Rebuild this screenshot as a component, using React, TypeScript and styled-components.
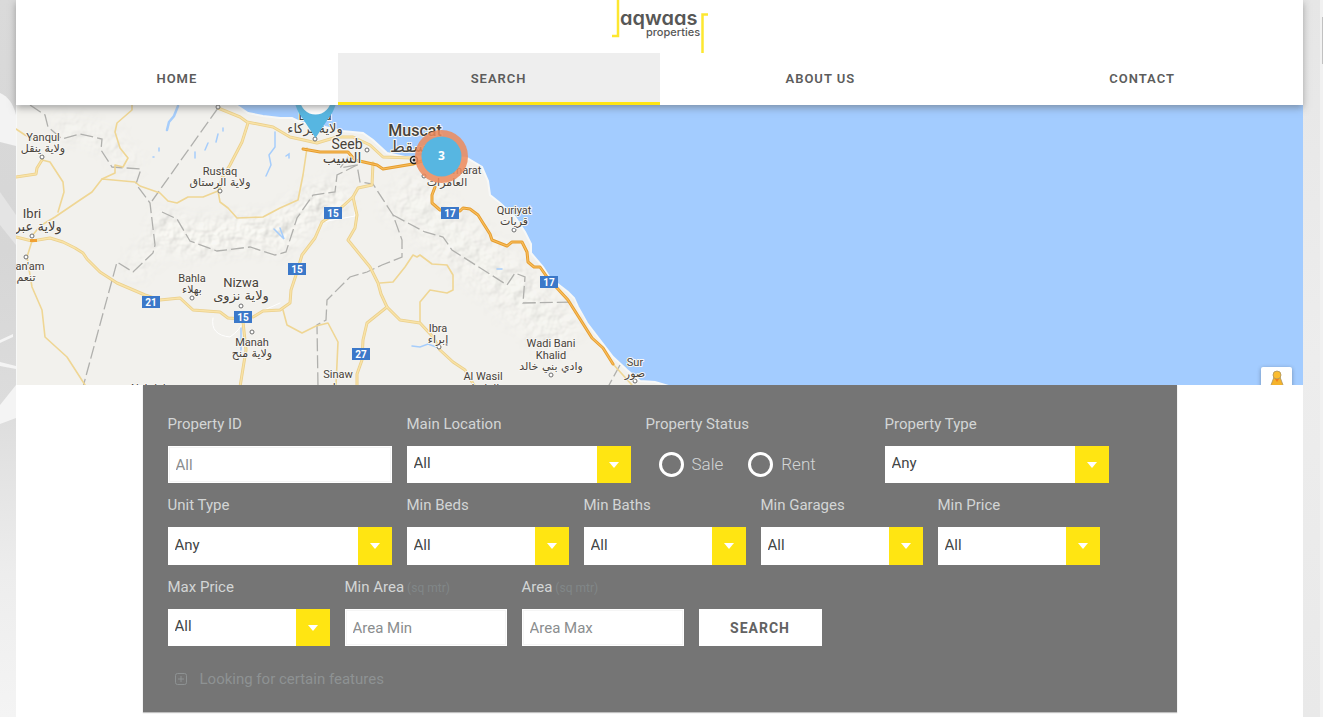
import React from "react";
import styled, { createGlobalStyle } from "styled-components";

const GlobalStyle = createGlobalStyle`
  *, *::before, *::after { box-sizing: border-box; }
  html { height: 100%; }
  body {
    margin: 0;
    min-height: 100%;
    overflow: hidden;
    background: #ededed;
    color: #5a5a5a;
    font-family: Roboto, "Liberation Sans", sans-serif;
  }
  input, select, button { font-family: inherit; border-radius: 0; }
`;

const Backdrop = styled.svg`
  position: fixed;
  inset: 0;
  width: 100%;
  height: 100%;
  z-index: -1;
`;

const Page = styled.div`
  min-height: 100vh;
  margin: 0 20px 0 16px;
  background: #fff;
`;

const Header = styled.header`
  position: relative;
  z-index: 2;
  background: #fff;
  box-shadow: 0 3px 7px rgba(90, 90, 90, 0.5);
`;

const LogoLink = styled.a`
  display: block;
  width: 100px;
  height: 53px;
  margin: 0 auto;
  svg { display: block; }
`;

const Nav = styled.nav`
  display: grid;
  grid-template-columns: repeat(4, 1fr);
`;

const NavLink = styled.a<{ $active?: boolean }>`
  height: 52px;
  border-bottom: 3px solid ${(p) => (p.$active ? "#ffe512" : "transparent")};
  background: ${(p) => (p.$active ? "#eeeeee" : "transparent")};
  color: #5c5c5c;
  font-size: 13px;
  font-weight: 600;
  line-height: 51px;
  letter-spacing: 1px;
  text-align: center;
  text-decoration: none;
`;

const MapArea = styled.section`
  position: relative;
  height: 280px;
  overflow: hidden;
  background: #a3ccff;
`;

const MapDrawing = styled.svg`
  display: block;
  width: 1287px;
  height: 280px;
`;

const Pegman = styled.button`
  position: absolute;
  right: 11px;
  bottom: -12px;
  width: 31px;
  height: 30px;
  padding: 0;
  border: 0;
  border-radius: 2px;
  background: #fff;
  box-shadow: 0 1px 4px rgba(0, 0, 0, 0.3);
  svg { display: block; margin: 2px auto; }
`;

const Panel = styled.form`
  max-width: 1034px;
  margin: 0 auto;
  padding: 17px 25px 18px;
  background: #757575;
  box-shadow: 0 1px 1px rgba(0, 0, 0, 0.25);
`;

const Row = styled.div`
  display: flex;
  flex-wrap: wrap;
  gap: 0 15px;
`;

const Field = styled.div<{ $wide?: boolean }>`
  width: ${(p) => (p.$wide ? 224 : 162)}px;
`;

const Label = styled.label`
  display: block;
  height: 44px;
  color: #d3d5d5;
  font-size: 15px;
  line-height: 44px;
  white-space: nowrap;
`;

const Unit = styled.small`
  color: #818788;
  font-size: 12px;
`;

const TextBox = styled.input`
  display: block;
  width: 100%;
  height: 37px;
  padding: 0 7px;
  border: 1px solid #fff;
  outline: 1px solid #f5f5f5;
  outline-offset: -2px;
  background: #fff;
  color: #444;
  font-size: 15px;
  &::placeholder { color: #8a8d8e; opacity: 1; }
`;

const SelectShell = styled.div<{ $tall?: boolean }>`
  display: grid;
  height: ${(p) => (p.$tall ? 38 : 37)}px;
`;

const Select = styled.select`
  grid-area: 1 / 1;
  width: 100%;
  padding: 0 40px 3px 7px;
  border: 0;
  appearance: none;
  background: #fff;
  color: #414546;
  font-size: 15px;
`;

const Arrow = styled.span`
  grid-area: 1 / 1;
  justify-self: end;
  display: grid;
  place-items: center;
  width: 34px;
  background: #ffe512;
  pointer-events: none;
  &::after {
    content: "";
    border: 5px solid transparent;
    border-top: 6px solid #fff;
    border-bottom: 0;
  }
`;

const RadioSet = styled.fieldset`
  width: 224px;
  min-width: 0;
  margin: 0;
  padding: 0;
  border: 0;
`;

const Legend = styled.legend`
  padding: 0;
  height: 44px;
  color: #d3d5d5;
  font-size: 15px;
  line-height: 44px;
`;

const RadioRow = styled.div`
  display: flex;
  gap: 25px;
  padding-left: 13px;
`;

const RadioLabel = styled.label`
  display: flex;
  align-items: center;
  gap: 8px;
  height: 36px;
  color: #d3d5d5;
  font-size: 17px;
  font-weight: 300;
`;

const Radio = styled.input`
  appearance: none;
  width: 25px;
  height: 25px;
  margin: 0;
  border: 3px solid #fff;
  border-radius: 50%;
  &:checked { background: radial-gradient(#fff 40%, transparent 45%); }
`;

const SearchButton = styled.button`
  align-self: end;
  width: 123px;
  height: 37px;
  border: 0;
  background: #fff;
  color: #626262;
  font-size: 14px;
  font-weight: 700;
  letter-spacing: 1px;
`;

const FeaturesLink = styled.a`
  display: inline-flex;
  align-items: center;
  gap: 13px;
  height: 20px;
  margin: 23px 0 5px 7px;
  color: #8e9293;
  font-size: 15px;
  text-decoration: none;
`;

function Logo() {
  return (
    <svg width="100" height="53" viewBox="610 0 100 53" role="img" aria-label="aqwaas properties">
      <path d="M618 0V36H612M702.500 53V14.500H708" fill="none" stroke="#fde730" strokeWidth="2.500" />
      <g fill="#575756" fontFamily="Inter, sans-serif" style={{ fontFeatureSettings: '"cv11" 1' }}>
        <text x="620" y="25" fontSize="20" fontWeight="600">aqwaas</text>
        <text x="646" y="36" fontSize="11" fontWeight="500">properties</text>
      </g>
    </svg>
  );
}

const localRoads = [
  "132,105 132,110 117,123 115,132 120,148 128,158 123,167 115,165 115,173 102,179",
  "16,129 25,135 37,141",
  "42,160 50,162 63,182 64,192 58,212",
  "32,236 40,226 55,217 80,200 92,192 102,179 135,182 140,186 160,193 168,201 177,203 188,197 203,197 218,191 220,202 228,208 237,218 263,217 280,208 298,200 303,175 307,148",
  "380,283 393,282 405,267 413,255 417,257 420,255 432,264 447,265 453,275 453,290 447,293 430,290 420,302 420,322",
  "283,310 287,325 302,333 316,326 328,323 338,342 336,385",
  "32,241 27,257 32,287 42,310 45,337 67,357 85,385",
  "613,364 632,385",
];

const mainRoads = [
  "16,177 36,174 37,168 42,160",
  "218,108 240,117 247,122 273,127 290,137 317,143 337,137 353,137 370,145 383,157 413,158",
  "248,123 242,142 230,165 222,178 219,190",
  "373,163 372,185 358,188 353,197 333,215 322,222 315,238 302,255 296,275 291,290 290,303 280,310 263,311 253,317",
  "353,197 357,215 355,228 348,240 370,267 378,283 381,294 387,307 400,320 420,323 433,337 440,350 453,362 465,370 475,387",
  "387,307 367,323 363,340 362,360 357,374 357,387",
  "16,237 32,241 50,238 63,242 75,248 83,253 87,259 100,272 117,283 145,295 160,300 180,298 193,310 220,312 228,318 243,319",
  "243,322 246,350 240,387",
];

const highways = [
  "303,149 320,152 348,152 355,160 377,165 383,169 413,164 425,160",
  "435,187 432,195 432,203 440,210 460,211 463,208 470,209 478,215 483,223 490,234 492,240 507,246 512,242 522,242 527,252 528,262 534,267 540,267 547,277 557,288 568,300 580,319 592,338 603,348 613,364",
];

const borders = [
  "30,105 45,115 48,127 62,139 80,134 102,139 101,150 112,167 141,169 136,184 150,203 155,245 153,253 133,272 117,262 83,387",
  "218,108 152,201",
  "162,212 177,219 190,241 217,251 250,247 275,255 286,252 297,218 313,195 335,192 337,175 357,165 360,182 373,184 393,215 402,240 402,257 382,265 367,272 350,277 327,300 326,320 317,325 318,387",
  "393,215 425,232 443,237 452,250 507,285 515,273 525,277 523,303 573,302",
  "348,157 340,168 357,165",
  "620,365 608,387",
];

type Place = { x: number; y: number; name: string; arabic?: string; ay?: number; size?: number; ax?: number; weight?: number };

const places: Place[] = [
  { x: 43, y: 141, name: "Yanqul", arabic: "ولاية ينقل", ay: 152 },
  { x: 32, y: 218, name: "Ibri", arabic: "ولاية عبري", ay: 231, ax: 33, size: 13 },
  { x: 30, y: 270, name: "an'am", arabic: "تنعم", ay: 281, ax: 26 },
  { x: 220, y: 175, name: "Rustaq", arabic: "ولاية الرستاق", ay: 186 },
  { x: 315, y: 120, name: "Barka", arabic: "ولاية بركاء", ay: 133, size: 13 },
  { x: 347, y: 149, name: "Seeb", arabic: "السيب", ay: 163, ax: 342, size: 14 },
  { x: 415, y: 136, name: "Muscat", arabic: "مسقط", ay: 152, ax: 413, size: 16, weight: 500 },
  { x: 457, y: 174, name: "Al Amarat", arabic: "العامرات", ay: 186, ax: 447 },
  { x: 514, y: 214, name: "Quriyat", arabic: "قريات", ay: 225 },
  { x: 192, y: 282, name: "Bahla", arabic: "بهلاء", ay: 293 },
  { x: 241, y: 287, name: "Nizwa", arabic: "ولاية نزوى", ay: 300, size: 13 },
  { x: 252, y: 346, name: "Manah", arabic: "ولاية منح", ay: 357 },
  { x: 438, y: 332, name: "Ibra", arabic: "إبراء", ay: 343 },
  { x: 338, y: 378, name: "Sinaw", arabic: "سناو", ay: 391 },
  { x: 483, y: 380, name: "Al Wasil", arabic: "الواصل", ay: 392 },
  { x: 551, y: 347, name: "Wadi Bani" },
  { x: 551, y: 359, name: "Khalid", arabic: "وادي بني خالد", ay: 370 },
  { x: 635, y: 366, name: "Sur", arabic: "صور", ay: 377 },
  { x: 150, y: 392, name: "Nahdah" },
];

const townDots = [
  [42, 157], [32, 236], [26, 257], [220, 191], [315, 139], [367, 150], [424, 176], [514, 230],
  [192, 298], [241, 306], [252, 332], [439, 347], [551, 375], [635, 381], [218, 107],
];

const shields: [number, number, string][] = [
  [333, 213, "15"], [450, 213, "17"], [297, 269, "15"], [549, 282, "17"], [151, 302, "21"], [243, 317, "15"], [361, 354, "27"],
];

const land =
  "M16 105H236L248 113L263 116L280 118L292 118L300 122L325 127L342 131L363 133L373 140L387 153L405 157L440 156L467 158L482 167L488 181L490 195L500 203L515 217L525 232L531 244L531 253L543 267L550 278L568 292L574 298L578 307L587 323L600 340L613 357L627 370L640 381L655 382L672 387H16Z";

function OmanMap() {
  return (
    <MapDrawing viewBox="16 105 1287 280" role="img" aria-label="Map of northern Oman">
      <defs>
        <clipPath id="land"><path d={land} /></clipPath>
        <filter id="relief" x="0" y="0" width="100%" height="100%" colorInterpolationFilters="sRGB">
          <feTurbulence type="fractalNoise" baseFrequency="0.07" numOctaves="3" seed="8" result="n" />
          <feDiffuseLighting in="n" surfaceScale="2" diffuseConstant="1.03" lightingColor="#fffef8" result="lit">
            <feDistantLight azimuth="225" elevation="68" />
          </feDiffuseLighting>
          <feComposite in="lit" in2="SourceAlpha" operator="in" />
        </filter>
        <filter id="soft" x="-20%" y="-20%" width="140%" height="140%"><feGaussianBlur stdDeviation="9" /></filter>
        <mask id="hills" maskUnits="userSpaceOnUse" x="16" y="105" width="680" height="280">
          <g fill="none" stroke="#fff" filter="url(#soft)">
            <path d="M155 225L190 240L245 232L280 235L310 205L345 195" strokeWidth="30" strokeOpacity="0.6" />
            <path d="M55 125L110 140L135 170M155 245L130 275" strokeWidth="20" strokeOpacity="0.3" />
            <path d="M395 190L440 225L480 260L525 300L570 340" strokeWidth="50" strokeOpacity="0.35" />
          </g>
        </mask>
      </defs>
      <rect x="16" y="105" width="1287" height="280" fill="#a3ccff" />
      <path d={land} fill="#f2f1ed" stroke="#f7f8f7" strokeWidth="2" />
      <g clipPath="url(#land)">
        <g mask="url(#hills)"><rect x="16" y="105" width="680" height="280" fill="#fff" filter="url(#relief)" /></g>
      </g>
      <g fill="none" stroke="#a6cdfb" strokeWidth="1.500" strokeLinecap="round">
        <path d="M178 106L174 116L169 122L167 130" strokeWidth="2.500" />
        <path d="M275 132V147L269 155L271 165L266 176" />
        <path d="M205 150L208 143M218 134L216 142M223 128V131M195 152V158M159 148V151M154 157H153M286 156L289 154V158" />
        <path d="M274 229L284 239L280 228M241 328V350M412 346L420 347L428 344L439 348M497 269H502" />
      </g>
      <g fill="none" stroke="#b0b0ad" strokeWidth="1.300" strokeDasharray="13 4">
        {borders.map((p) => <polyline key={p} points={p} />)}
      </g>
      <g fill="none" strokeLinejoin="round" strokeLinecap="round">
        <path d="M213 318Q210 335 230 337Q240 330 243 322M260 312L280 303M322 222L355 216V212" stroke="#fff" strokeWidth="1" />
        <g stroke="#efd694" strokeWidth="1.600">{localRoads.map((p) => <polyline key={p} points={p} />)}</g>
        <g stroke="#ebd08c" strokeWidth="3">{mainRoads.map((p) => <polyline key={p} points={p} />)}</g>
        <g stroke="#f9e3a8" strokeWidth="1.400">{mainRoads.map((p) => <polyline key={p} points={p} />)}</g>
        <g stroke="#e59d2e" strokeWidth="3">{highways.map((p) => <polyline key={p} points={p} />)}</g>
        <g stroke="#f9bd5c" strokeWidth="1.200">{highways.map((p) => <polyline key={p} points={p} />)}</g>
      </g>
      <path d="M30 240.500H37" stroke="#f0a033" strokeWidth="3" />
      <g fill="#fff" stroke="#6e6e6e" strokeWidth="1">
        {townDots.map(([x, y]) => <circle key={`${x}-${y}`} cx={x} cy={y} r="2" />)}
      </g>
      <circle cx="414" cy="160" r="3.500" fill="#fff" stroke="#222" strokeWidth="1.500" />
      <circle cx="414" cy="160" r="1.500" fill="#222" />
      <g fill="#47423a" stroke="#f7f6f3" strokeWidth="2" strokeLinejoin="round" paintOrder="stroke" textAnchor="middle">
        {places.map((p) => (
          <React.Fragment key={p.name}>
            <text x={p.x} y={p.y} fontSize={p.size ?? 11} fontWeight={p.weight ?? 400} fontFamily="Roboto, sans-serif">{p.name}</text>
            {p.arabic && (
              <text x={p.ax ?? p.x} y={p.ay} fontSize={p.size ?? 11} fontFamily="'DejaVu Sans', sans-serif" direction="rtl">{p.arabic}</text>
            )}
          </React.Fragment>
        ))}
      </g>
      <g fontFamily="Roboto, sans-serif" fontSize="10" fontWeight="700" textAnchor="middle">
        {shields.map(([x, y, n]) => (
          <g key={`${x}-${y}`}>
            <rect x={x - 9} y={y - 6} width="18" height="12" fill="#3b78c9" />
            <text x={x} y={y + 4} fill="#fff">{n}</text>
          </g>
        ))}
      </g>
      <path d="M294 100Q297 112 303 119L315.500 138L328 119Q334 112 337 100Z" fill="#57b6e1" />
      <circle cx="315.500" cy="99" r="15.500" fill="#fff" />
      <circle cx="441.500" cy="156.500" r="26.500" fill="#ec8a5c" fillOpacity="0.86" />
      <circle cx="441.500" cy="156.500" r="20" fill="#57b6e1" />
      <text x="441.500" y="160" fill="#fff" fontFamily="'Open Sans', sans-serif" fontSize="12" fontWeight="700" textAnchor="middle">3</text>
    </MapDrawing>
  );
}

type SelectFieldProps = { id: string; label: string; value: string; wide?: boolean; tall?: boolean };

function SelectField({ id, label, value, wide, tall }: SelectFieldProps) {
  return (
    <Field $wide={wide}>
      <Label htmlFor={id}>{label}</Label>
      <SelectShell $tall={tall}>
        <Select id={id} defaultValue={value}><option>{value}</option></Select>
        <Arrow />
      </SelectShell>
    </Field>
  );
}

type TextFieldProps = { id: string; label: string; placeholder: string; unit?: string; wide?: boolean };

function TextField({ id, label, placeholder, unit, wide }: TextFieldProps) {
  return (
    <Field $wide={wide}>
      <Label htmlFor={id}>{label}{unit && <Unit> {unit}</Unit>}</Label>
      <TextBox id={id} type="text" placeholder={placeholder} />
    </Field>
  );
}

function PaperTexture() {
  return (
    <Backdrop aria-hidden="true" preserveAspectRatio="none" viewBox="0 0 1323 717">
      <defs>
        <linearGradient id="leftShade" x1="0" y1="0" x2="0" y2="1">
          <stop offset="0" stopColor="#dadada" />
          <stop offset="0.350" stopColor="#d6d6d6" />
          <stop offset="0.560" stopColor="#dcdcdc" />
          <stop offset="0.800" stopColor="#ededed" />
          <stop offset="1" stopColor="#f4f4f4" />
        </linearGradient>
        <linearGradient id="rightShade" x1="0" y1="0" x2="0" y2="1">
          <stop offset="0" stopColor="#e6e6e6" />
          <stop offset="0.500" stopColor="#ededed" />
          <stop offset="1" stopColor="#e9e9e9" />
        </linearGradient>
      </defs>
      <rect width="16" height="717" fill="url(#leftShade)" />
      <path d="M0 93Q12 98 16 115V146L0 142Z" fill="#f3f3f3" />
      <path d="M0 192L16 215V245L0 225Z" fill="#e4e4e4" />
      <path d="M0 340L13 334V337L0 343ZM0 362L16 366V369L0 366ZM0 405L16 385V418L0 424Z" fill="#f4f4f4" />
      <rect x="1303" width="17" height="717" fill="url(#rightShade)" />
      <rect x="1320" width="3" height="717" fill="#f1f1f1" />
      <rect x="1322" y="17" width="1" height="47" fill="#c1c1c1" />
    </Backdrop>
  );
}

export default function App() {
  return (
    <>
      <GlobalStyle />
      <PaperTexture />
      <Page>
        <Header>
          <LogoLink href="#home"><Logo /></LogoLink>
          <Nav>
            <NavLink href="#home">HOME</NavLink>
            <NavLink href="#search" $active>SEARCH</NavLink>
            <NavLink href="#about">ABOUT US</NavLink>
            <NavLink href="#contact">CONTACT</NavLink>
          </Nav>
        </Header>
        <MapArea>
          <OmanMap />
          <Pegman type="button" aria-label="Street view">
            <svg width="14" height="24" viewBox="0 0 14 24">
              <path d="M4 7Q7 5 10 7L13 15V17H11V23H3V17H1V15Z" fill="#f5b32b" stroke="#ab9460" strokeWidth="0.800" />
              <circle cx="7" cy="5" r="4" fill="#fbbc2f" stroke="#ab9460" strokeWidth="0.800" />
              <path d="M5 9H9L7 12Z" fill="#ef7f1f" />
            </svg>
          </Pegman>
        </MapArea>
        <Panel>
          <Row>
            <TextField wide id="property-id" label="Property ID" placeholder="All" />
            <SelectField wide id="location" label="Main Location" value="All" />
            <RadioSet>
              <Legend>Property Status</Legend>
              <RadioRow>
                <RadioLabel><Radio type="radio" name="status" />Sale</RadioLabel>
                <RadioLabel><Radio type="radio" name="status" />Rent</RadioLabel>
              </RadioRow>
            </RadioSet>
            <SelectField wide id="type" label="Property Type" value="Any" />
          </Row>
          <Row>
            <SelectField tall wide id="unit-type" label="Unit Type" value="Any" />
            <SelectField tall id="beds" label="Min Beds" value="All" />
            <SelectField tall id="baths" label="Min Baths" value="All" />
            <SelectField tall id="garages" label="Min Garages" value="All" />
            <SelectField tall id="min-price" label="Min Price" value="All" />
          </Row>
          <Row>
            <SelectField id="max-price" label="Max Price" value="All" />
            <TextField id="area-min" label="Min Area" unit="(sq mtr)" placeholder="Area Min" />
            <TextField id="area-max" label="Area" unit="(sq mtr)" placeholder="Area Max" />
            <SearchButton type="button">SEARCH</SearchButton>
          </Row>
          <FeaturesLink href="#features">
            <svg width="12" height="12" viewBox="0 0 12 12" fill="none" stroke="currentColor">
              <rect x="0.500" y="0.500" width="11" height="11" rx="2" />
              <path d="M6 3V9M3 6H9" />
            </svg>
            Looking for certain features
          </FeaturesLink>
        </Panel>
      </Page>
    </>
  );
}
